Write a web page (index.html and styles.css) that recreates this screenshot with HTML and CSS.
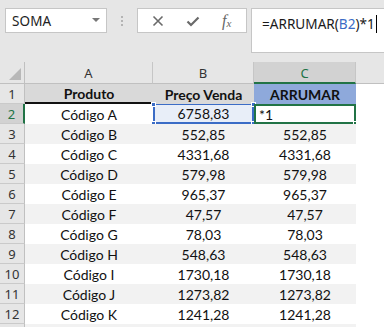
FILE: index.html
```html
<!DOCTYPE html>
<html>
<head>
<meta charset="utf-8">
<link rel="stylesheet" href="styles.css">
</head>
<body>
<div class="toolbar">
  <div class="namebox"><span class="nb-text">SOMA</span><span class="nb-arrow"></span></div>
  <div class="sep"><i></i><i></i><i></i></div>
  <div class="btns">
    <svg class="ico" width="14" height="14" viewBox="0 0 14 14"><path d="M2.5 2.5 L11.5 11.5 M11.5 2.5 L2.5 11.5" stroke="#6a6a6a" stroke-width="1.6" fill="none"/></svg>
    <svg class="ico" width="14" height="14" viewBox="0 0 14 14"><path d="M1.5 7.5 L5 11 L12.5 3.5" stroke="#6a6a6a" stroke-width="2.2" fill="none"/></svg>
    <span class="fx">f<sub>x</sub></span>
  </div>
  <div class="formula"><span>=ARRUMAR(</span><span class="ref">B2</span><span>)*1</span><span class="caret"></span></div>
</div>
<div class="grid">
  <div class="corner"><span class="tri"></span></div>
  <div class="ch">A</div>
  <div class="ch">B</div>
  <div class="ch ch-act">C</div>
  <div class="ch ch-last"></div>

  <div class="rh">1</div>
  <div class="c hd hd-a">Produto</div>
  <div class="c hd">Preço Venda</div>
  <div class="c hd hd-blue">ARRUMAR</div>
  <div class="c e"></div>

  <div class="rh rh-act">2</div>
  <div class="c w">Código A</div>
  <div class="c sel">6758,83<i class="h tl"></i><i class="h tr"></i><i class="h bl"></i><i class="h br"></i></div>
  <div class="c act">*1<i class="g br"></i></div>
  <div class="c e"></div>

  <div class="rh">3</div><div class="c b">Código B</div><div class="c b">552,85</div><div class="c b">552,85</div><div class="c e"></div>
  <div class="rh">4</div><div class="c w">Código C</div><div class="c w">4331,68</div><div class="c w">4331,68</div><div class="c e"></div>
  <div class="rh">5</div><div class="c b">Código D</div><div class="c b">579,98</div><div class="c b">579,98</div><div class="c e"></div>
  <div class="rh">6</div><div class="c w">Código E</div><div class="c w">965,37</div><div class="c w">965,37</div><div class="c e"></div>
  <div class="rh">7</div><div class="c b">Código F</div><div class="c b">47,57</div><div class="c b">47,57</div><div class="c e"></div>
  <div class="rh">8</div><div class="c w">Código G</div><div class="c w">78,03</div><div class="c w">78,03</div><div class="c e"></div>
  <div class="rh">9</div><div class="c b">Código H</div><div class="c b">548,63</div><div class="c b">548,63</div><div class="c e"></div>
  <div class="rh">10</div><div class="c w">Código I</div><div class="c w">1730,18</div><div class="c w">1730,18</div><div class="c e"></div>
  <div class="rh">11</div><div class="c b">Código J</div><div class="c b">1273,82</div><div class="c b">1273,82</div><div class="c e"></div>
  <div class="rh">12</div><div class="c w">Código K</div><div class="c w">1241,28</div><div class="c w">1241,28</div><div class="c e"></div>
  <div class="rh rh-cut"></div><div class="c b"></div><div class="c b"></div><div class="c b"></div><div class="c e"></div>
</div>
</body>
</html>
```

FILE: styles.css
```css
html, body {
  margin: 0;
  padding: 0;
  background: #e6e6e6;
  width: 384px;
  height: 327px;
  overflow: hidden;
}
.toolbar {
  height: 62px;
  box-sizing: border-box;
  padding-top: 8px;
  display: flex;
  align-items: flex-start;
  font-family: "Noto Sans", "Open Sans", sans-serif;
}
.namebox {
  margin-left: 5px;
  width: 102px;
  height: 25px;
  box-sizing: border-box;
  background: #fff;
  border: 1px solid #c6c6c6;
  display: flex;
  align-items: center;
  justify-content: space-between;
  padding: 0 6px 0 6px;
}
.nb-text {
  font-size: 13.5px;
  color: #222;
  letter-spacing: 0.1px;
}
.nb-arrow {
  width: 0;
  height: 0;
  border-left: 4px solid transparent;
  border-right: 4px solid transparent;
  border-top: 4px solid #777;
  margin-bottom: 2px;
}
.sep {
  width: 30px;
  height: 25px;
  display: flex;
  flex-direction: column;
  align-items: center;
  justify-content: center;
  gap: 2px;
}
.sep i {
  display: block;
  width: 2px;
  height: 2px;
  background: #b4b4b4;
}
.btns {
  width: 110px;
  height: 25px;
  box-sizing: border-box;
  background: #fff;
  border: 1px solid #c6c6c6;
  display: flex;
  align-items: center;
  padding-left: 13px;
  gap: 21px;
}
.fx {
  font-family: "Liberation Serif", serif;
  font-style: italic;
  font-size: 16px;
  color: #666;
  margin-left: 1px;
}
.fx sub {
  font-size: 11px;
  vertical-align: -1px;
}
.formula {
  margin-left: 4px;
  flex: 1;
  height: 45px;
  box-sizing: border-box;
  background: #fff;
  border: 1px solid #c6c6c6;
  border-right: none;
  padding: 5px 0 0 10px;
  font-size: 13.6px;
  color: #1a1a1a;
  display: flex;
  align-items: flex-start;
  line-height: 20px;
}
.formula .ref { color: #3b6cc6; }
.caret {
  display: inline-block;
  width: 1px;
  height: 18px;
  background: #000;
  margin-left: 1px;
  margin-top: 1px;
}
.grid {
  display: grid;
  grid-template-columns: 25px 128px 101px 102px 1fr;
  grid-template-rows: 22px repeat(12, 20px) 3px;
  background: #fff;
}
.corner {
  background: #e6e6e6;
  border-right: 1px solid #c0c0c0;
  border-bottom: 1px solid #c0c0c0;
  position: relative;
}
.tri {
  position: absolute;
  right: 3px;
  bottom: 3px;
  width: 0;
  height: 0;
  border-left: 12px solid transparent;
  border-bottom: 12px solid #b8b8b8;
}
.ch {
  background: #e6e6e6;
  border-right: 1px solid #c6c6c6;
  border-bottom: 1px solid #c0c0c0;
  font-family: "Noto Sans", "Open Sans", sans-serif;
  font-size: 13px;
  color: #333;
  display: flex;
  align-items: center;
  justify-content: center;
  padding-top: 1px;
}
.ch-act {
  background: #d2d2d2;
  color: #217346;
  border-bottom: 2px solid #217346;
  padding-top: 2px;
}
.ch-last { border-right: none; }
.rh {
  background: #e6e6e6;
  border-right: 1px solid #c0c0c0;
  border-bottom: 1px solid #cacaca;
  font-family: "Noto Sans", "Open Sans", sans-serif;
  font-size: 13px;
  color: #333;
  display: flex;
  align-items: center;
  justify-content: center;
}
.rh-cut { border-bottom: none; }
.rh-act {
  color: #217346;
  background: #d2d2d2;
  border-right: 2px solid #217346;
}
.c {
  font-family: "Lato", sans-serif;
  font-size: 14px;
  color: #111;
  display: flex;
  align-items: center;
  justify-content: center;
  position: relative;
  box-sizing: border-box;
}
.w { background: #fff; }
.b { background: #f2f2f2; }
.e { background: #fff; }
.hd {
  background: #d9d9d9;
  font-weight: bold;
}
.hd-a { border-bottom: 2px solid #111; }
.hd-blue { background: #8ea9db; }
.sel {
  background: #e8eef8;
  border: 2px solid #3b6cc6;
  border-top-width: 1px;
}
.act {
  background: #fff;
  border: 2px solid #217346;
  justify-content: flex-start;
  padding-left: 3px;
}
.h, .g {
  position: absolute;
  width: 5px;
  height: 5px;
  box-sizing: border-box;
  border: 1px solid #fff;
}
.h { background: #3b6cc6; }
.g { background: #217346; }
.h.tl { left: -4px; top: -3px; }
.h.tr { right: -4px; top: -3px; }
.h.bl { left: -4px; bottom: -4px; }
.h.br { right: -4px; bottom: -4px; }
.g.br { right: -4px; bottom: -4px; }
```
